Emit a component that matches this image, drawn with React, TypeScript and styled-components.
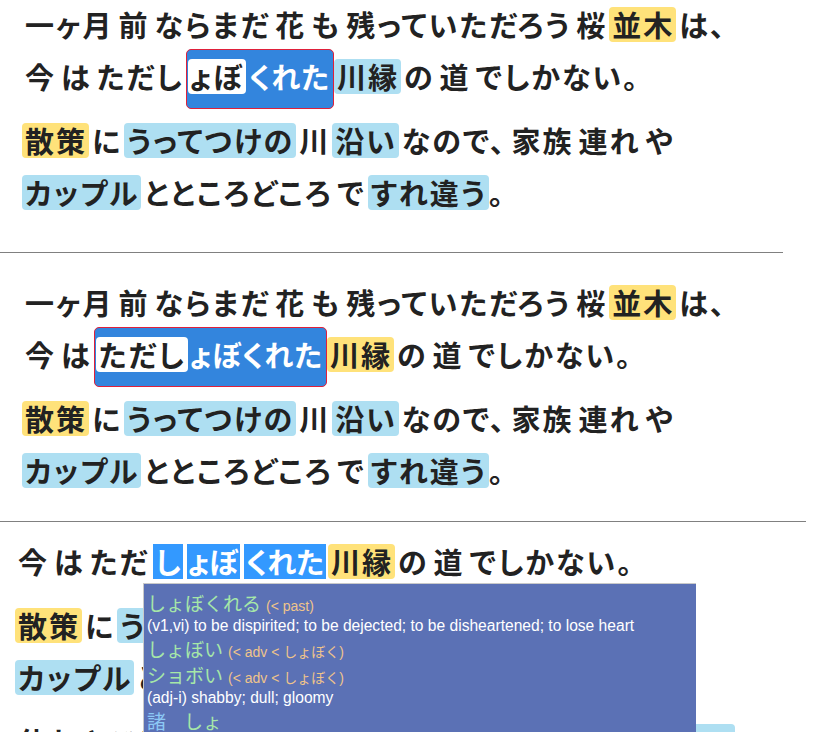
import React from "react";
import styled, { createGlobalStyle, css } from "styled-components";

const GlobalStyle = createGlobalStyle`
  html, body {
    margin: 0;
    padding: 0;
    background: #fff;
    overflow: hidden;
  }
  body {
    font-family: "Noto Sans CJK JP", "Noto Sans", sans-serif;
    color: #222;
  }
`;

type Tone = "plain" | "yellow" | "blue" | "white" | "inverse" | "sel" | "tight";

const tones = {
  plain: css``,
  yellow: css`
    background: #ffe27a;
  `,
  blue: css`
    background: #aedff2;
  `,
  white: css`
    background: #fff;
    color: #222;
  `,
  inverse: css`
    color: #fff;
    letter-spacing: 1px;
  `,
  sel: css`
    background: #3399ff;
    color: #fff;
    border-radius: 0;
    letter-spacing: 0;
    padding: 0 2px;
    margin: 0 2px;
  `,
  tight: css`
    padding: 0;
  `,
};

const Section = styled.section<{ $width: number; $pad: string; $rule?: "top" | "bottom" }>`
  position: relative;
  box-sizing: border-box;
  width: ${(p) => p.$width}px;
  padding: ${(p) => p.$pad};
  ${(p) => p.$rule === "top" && css`border-top: 1px solid #808080;`}
  ${(p) => p.$rule === "bottom" && css`border-bottom: 1px solid #808080;`}
`;

const Para = styled.div`
  font-size: 29px;
  font-weight: 700;
  letter-spacing: 2px;
  font-feature-settings: "palt";
  line-height: 52px;
  white-space: nowrap;
  & + & {
    margin-top: 12px;
  }
`;

const Line = styled.div``;

const Word = styled.span<{ $tone?: Tone }>`
  display: inline-block;
  height: 35px;
  line-height: 35px;
  padding: 0 2px 0 3px;
  border-radius: 4px;
  ${(p) => tones[p.$tone ?? "plain"]}
`;

const Selection = styled.span`
  display: inline-block;
  line-height: 35px;
  margin: -10px 0 -14px;
  padding: 9px 1px 14px;
  background: #3385dd;
  border: 1px solid #e0203a;
  border-radius: 5px;
`;

const Popup = styled.div`
  position: absolute;
  left: 143px;
  top: 61px;
  width: 553px;
  height: 190px;
  box-sizing: border-box;
  padding: 6px 0 0 3px;
  background: #5b71b5;
  border-top: 1px solid #c9c9c9;
  border-left: 1px solid #c9c9c9;
  overflow: hidden;
`;

const Reading = styled.div`
  height: 26px;
  font-family: "Noto Sans CJK JP", sans-serif;
  font-size: 19px;
  line-height: 26px;
  color: #a6e7a8;
  white-space: nowrap;
`;

const Kanji = styled.span`
  color: #8cc8f5;
  margin-right: 18px;
`;

const Note = styled.span`
  font-family: "Liberation Sans", "Noto Sans CJK JP", sans-serif;
  font-size: 14px;
  line-height: 1;
  color: #efc48a;
  margin-left: 5px;
`;

const Gloss = styled.div`
  height: 20px;
  font-family: "Liberation Sans", Arial, sans-serif;
  font-size: 15.6px;
  line-height: 20px;
  color: #fff;
  white-space: nowrap;
`;

type W = [string, Tone?];

const line1: W[] = [
  ["一ヶ月"],
  ["前"],
  ["ならまだ"],
  ["花"],
  ["も"],
  ["残っていただろう"],
  ["桜"],
  ["並木", "yellow"],
  ["は、"],
];

const walk1: W[] = [
  ["散策", "yellow"],
  ["に"],
  ["うってつけの", "blue"],
  ["川"],
  ["沿い", "blue"],
  ["なので、"],
  ["家族"],
  ["連れ"],
  ["や"],
];

const walk2: W[] = [
  ["カップル", "blue"],
  ["とところどころ"],
  ["で"],
  ["すれ違う", "blue"],
  ["。", "tight"],
];

const rest: W[] = [
  ["休む"],
  ["ところ"],
  ["も"],
  ["なく"],
  ["、"],
  ["ただ"],
  ["通り過ぎる"],
  ["だけ"],
  ["の"],
  ["人"],
  ["が"],
  ["多い", "blue"],
];

function Words({ items }: { items: W[] }) {
  return (
    <>
      {items.map(([text, tone], i) => (
        <Word key={i} $tone={tone}>
          {text}
        </Word>
      ))}
    </>
  );
}

function Walk() {
  return (
    <Para>
      <Line>
        <Words items={walk1} />
      </Line>
      <Line>
        <Words items={walk2} />
      </Line>
    </Para>
  );
}

function App() {
  return (
    <>
      <GlobalStyle />
      <Section $width={783} $pad="0 0 34px 22px" $rule="bottom" style={{ marginTop: -2 }}>
        <Para>
          <Line>
            <Words items={line1} />
          </Line>
          <Line>
            <Words items={[["今"], ["は"], ["ただし"]]} />
            <Selection>
              <Word $tone="white">ょぼ</Word>
              <Word $tone="inverse">くれた</Word>
            </Selection>
            <Words items={[["川縁", "blue"], ["の"], ["道"], ["でしかない。"]]} />
          </Line>
        </Para>
        <Walk />
      </Section>
      <Section $width={783} $pad="23px 0 25px 22px">
        <Para>
          <Line>
            <Words items={line1} />
          </Line>
          <Line>
            <Words items={[["今"], ["は"]]} />
            <Selection>
              <Word $tone="white">ただし</Word>
              <Word $tone="inverse">ょぼくれた</Word>
            </Selection>
            <Words items={[["川縁", "yellow"], ["の"], ["道"], ["でしかない。"]]} />
          </Line>
        </Para>
        <Walk />
      </Section>
      <Section $width={806} $pad="13px 0 0 15px" $rule="top">
        <Para>
          <Line>
            <Words
              items={[
                ["今"],
                ["は"],
                ["ただ"],
                ["し", "sel"],
                ["ょぼ", "sel"],
                ["くれた", "sel"],
                ["川縁", "yellow"],
                ["の"],
                ["道"],
                ["でしかない。"],
              ]}
            />
          </Line>
        </Para>
        <Walk />
        <Para>
          <Line>
            <Words items={rest} />
          </Line>
        </Para>
        <Popup>
          <Reading>
            しょぼくれる<Note>(&lt; past)</Note>
          </Reading>
          <Gloss>
            (v1,vi) to be dispirited; to be dejected; to be disheartened; to
            lose heart
          </Gloss>
          <Reading>
            しょぼい<Note>(&lt; adv &lt; しょぼく)</Note>
          </Reading>
          <Reading>
            ショボい<Note>(&lt; adv &lt; しょぼく)</Note>
          </Reading>
          <Gloss>(adj-i) shabby; dull; gloomy</Gloss>
          <Reading>
            <Kanji>諸</Kanji>しょ
          </Reading>
          <Gloss>(n) various; many; several</Gloss>
        </Popup>
      </Section>
    </>
  );
}

export default App;
